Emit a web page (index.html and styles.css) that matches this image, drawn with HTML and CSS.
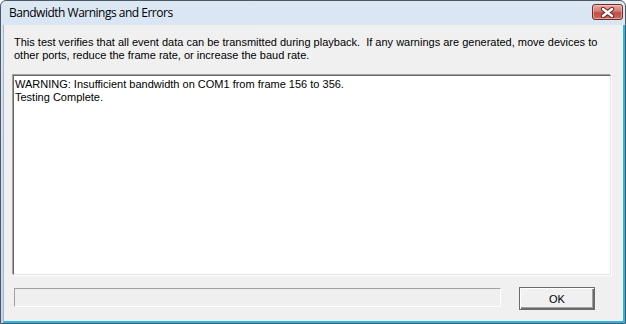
FILE: index.html
```html
<!DOCTYPE html>
<html lang="en">
<head>
  <meta charset="UTF-8" />
  <title>Bandwidth Warnings and Errors</title>
  <link rel="stylesheet" href="styles.css">
</head>
<body>

<div class="window">
  <div class="titlebar">
    <span class="title">Bandwidth Warnings and Errors</span>
    <div class="close-btn">
      <svg width="15" height="11" viewBox="0 0 15 11">
        <path d="M3 2 L12 9 M12 2 L3 9" stroke="#5a2424" stroke-width="4.2" stroke-linecap="round" fill="none"/>
        <path d="M3 2 L12 9 M12 2 L3 9" stroke="#ffffff" stroke-width="2.4" stroke-linecap="round" fill="none"/>
      </svg>
    </div>
  </div>

  <div class="client">
    <p class="intro">This test verifies that all event data can be transmitted during playback.&nbsp; If any warnings are generated, move devices to<br>other ports, reduce the frame rate, or increase the baud rate.</p>

    <div class="output" id="output">
      <div>WARNING: Insufficient bandwidth on COM1 from frame 156 to 356.</div>
      <div>Testing Complete.</div>
    </div>

    <div class="bottom-row">
      <div class="progress"><div class="progress-fill" style="width: 0%"></div></div>
      <button class="ok-btn">OK</button>
    </div>
  </div>
</div>

</body>
</html>
```

FILE: styles.css
```css
body {
  margin: 0;
  background: #ffffff;
}
.window {
  width: 626px;
  height: 324px;
  box-sizing: border-box;
  border: 1px solid #4f5966;
  border-radius: 6px 6px 0 0;
  background: linear-gradient(#dce7f4, #c3d6eb);
  display: flex;
  flex-direction: column;
}
.titlebar {
  height: 24px;
  display: flex;
  align-items: flex-start;
  font-family: "Open Sans", "Noto Sans", sans-serif;
  font-size: 12px;
  letter-spacing: -0.5px;
  color: #000;
}
.title {
  margin: 4px 0 0 8px;
  line-height: 16px;
}
.close-btn {
  margin: 3px 2px 0 auto;
  width: 29px;
  height: 14px;
  border: 1px solid #6a2c2c;
  border-radius: 3px;
  background: linear-gradient(#e8a89e 0%, #d47a70 45%, #c24e46 55%, #c96b5c 100%);
  box-shadow: inset 0 0 0 1px rgba(255, 220, 210, 0.5);
  display: flex;
  align-items: center;
  justify-content: center;
}
.close-btn svg {
  display: block;
}
.client {
  flex: 1;
  margin-left: 2px;
  border-left: 1px solid #9fb5d0;
  border-right: 2px solid #2bb4e6;
  border-bottom: 2px solid #2bb4e6;
  background: #f0f0f0;
  font-family: "Liberation Sans", Arial, sans-serif;
  font-size: 11px;
  line-height: 13px;
  color: #000;
  display: flex;
  flex-direction: column;
}
.intro {
  margin: 11px 0 0 10px;
  white-space: nowrap;
}
.output {
  margin: 13px 12px 0 9px;
  height: 200px;
  box-sizing: border-box;
  padding: 2px 1px;
  background: #ffffff;
  border: 1px solid;
  border-color: #696969 #e3e3e3 #e3e3e3 #696969;
  box-shadow: -1px -1px 0 #a0a0a0, 1px 1px 0 #ffffff;
}
.bottom-row {
  display: flex;
  align-items: flex-start;
  margin: 12px 0 0 10px;
}
.progress {
  width: 487px;
  height: 19px;
  margin-top: 1px;
  box-sizing: border-box;
  border: 1px solid;
  border-color: #a0a0a0 #ffffff #ffffff #a0a0a0;
  background: #efefef;
}
.progress-fill {
  height: 100%;
  background: #06b025;
}
.ok-btn {
  margin-left: 18px;
  width: 76px;
  height: 23px;
  border: 1px solid #6b6b6b;
  background: #f0f0f0;
  box-shadow: inset 1px 1px 0 #ffffff, inset -1px -1px 0 #696969, inset -2px -2px 0 #a0a0a0;
  font-family: "Liberation Sans", Arial, sans-serif;
  font-size: 11px;
  color: #000;
  padding: 0;
  cursor: pointer;
}
```
